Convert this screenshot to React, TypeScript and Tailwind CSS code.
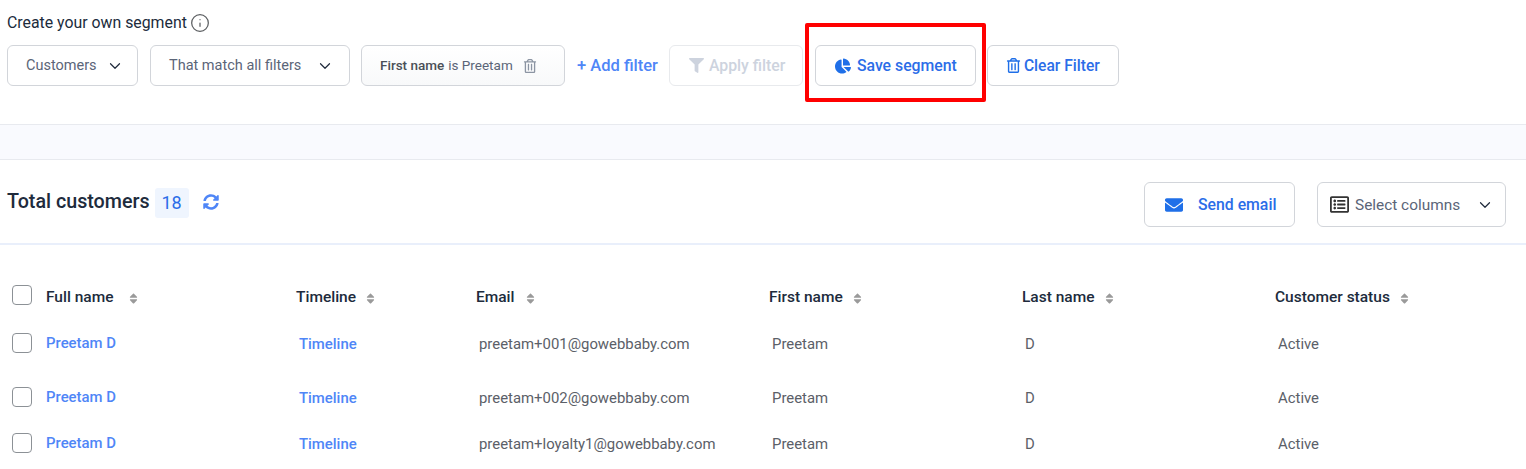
import React from "react";
import { FaChartPie, FaFilter, FaEnvelope, FaSyncAlt, FaSort, FaRegTrashAlt, FaRegListAlt } from "react-icons/fa";
import { ChevronDown, Info } from "lucide-react";

const rows = [
  "preetam+001@gowebbaby.com",
  "preetam+002@gowebbaby.com",
  "preetam+loyalty1@gowebbaby.com",
];

const cols = [
  { label: "Full name", w: "w-[250px]", gap: "ml-[13px]" },
  { label: "Timeline", w: "w-[180px]", gap: "ml-[8px]" },
  { label: "Email", w: "w-[293px]", gap: "ml-[9px]" },
  { label: "First name", w: "w-[253px]", gap: "ml-[8px]" },
  { label: "Last name", w: "w-[253px]", gap: "ml-[8px]" },
  { label: "Customer status", w: "w-[240px]", gap: "ml-[8px]" },
];

function Check({ extra = "" }: { extra?: string }) {
  return <span className={`block w-5 h-5 shrink-0 rounded-[4px] border-[1.5px] border-[#8c9196] bg-white mr-[14px] ${extra}`} />;
}

const btn = "h-[41px] flex items-center rounded-[6px] border border-[#d2d5da] bg-white";

export default function App() {
  return (
    <div className="relative w-[1526px] h-[469px] overflow-hidden bg-white font-['Roboto',sans-serif] text-[#202b3c]">
      <section className="h-[125px] border-b border-[#e8eaef] px-[7px] pt-[12px]">
        <div className="flex items-center h-[22px] text-[15.85px] leading-[22px] font-normal">
          Create your own segment
          <Info size={20} strokeWidth={1.5} className="ml-[3px] text-[#5c5f62]" />
        </div>
        <div className="flex items-center mt-[11px]">
          <div className={`${btn} w-[131px] pl-[18px] text-[14.5px] text-[#5b6578]`}>
            Customers
            <ChevronDown size={18} strokeWidth={1.6} className="ml-[9px] text-[#202b3c]" />
          </div>
          <div className={`${btn} w-[200px] ml-[12px] pl-[18px] text-[14.5px] text-[#5b6578]`}>
            That match all filters
            <ChevronDown size={18} strokeWidth={1.6} className="ml-[15px] text-[#202b3c]" />
          </div>
          <div className={`${btn} w-[204px] ml-[11px] pl-[18px] text-[13.5px] text-[#5b6578] bg-gradient-to-b from-white to-[#f8f9fa]`}>
            <span className="font-medium text-[#4a4f57]">First name</span>
            <span className="ml-[4px]">is Preetam</span>
            <FaRegTrashAlt size={14} className="ml-[10px] text-[#8c95a3]" />
          </div>
          <span className="ml-[12px] pt-[2px] text-[16.5px] font-medium text-[#4f86f7]">+ Add filter</span>
          <div className="h-[41px] flex items-center w-[134px] ml-[11px] pl-[19px] rounded-[6px] border border-[#e8eaed] bg-white text-[15.8px] font-medium text-[#cdd3de]">
            <FaFilter size={15} className="mr-[5px] text-[#cdd3de]" />
            <span className="pt-[1px]">Apply filter</span>
          </div>
          <div className={`${btn} w-[161px] ml-[12px] pl-[19px] text-[15.8px] font-medium text-[#2b6de8]`}>
            <FaChartPie size={16} className="mr-[6px] text-[#1f6fe8]" />
            Save segment
          </div>
          <div className={`${btn} w-[132px] ml-[11px] pl-[18px] text-[15.6px] font-medium text-[#2b6de8]`}>
            <FaRegTrashAlt size={15} className="mr-[3px] text-[#1f6fe8]" />
            <span className="pt-[2px]">Clear Filter</span>
          </div>
        </div>
      </section>

      <div className="h-[34px] bg-[#f9fafe]" />

      <section className="h-[86px] border-t border-t-[#e8eaef] border-b-2 border-b-[#e9effb] flex items-start px-[7px]">
        <div className="flex items-center mt-[27px] h-[30px]">
          <span className="text-[19.7px] font-medium text-[#202b3c]">Total customers</span>
          <span className="ml-[5px] w-[34px] h-[30px] mt-[2px] pb-[2px] flex items-center justify-center rounded-[3px] bg-[#eff5fe] text-[18px] text-[#2b6de8]">18</span>
          <FaSyncAlt size={16} className="ml-[14px] text-[#4f86f7]" />
        </div>
        <div className="ml-auto flex items-center mt-[22px] mr-[13px]">
          <div className="h-[45px] w-[151px] flex items-center pl-[20px] rounded-[6px] border border-[#d2d5da] text-[15.8px] font-medium text-[#2b6de8]">
            <FaEnvelope size={18} className="mr-[15px] text-[#1f6fe8]" />
            Send email
          </div>
          <div className="h-[45px] w-[189px] ml-[22px] flex items-center pl-[12px] rounded-[6px] border border-[#d2d5da] text-[15.4px] text-[#5b6578]">
            <FaRegListAlt size={19} className="mr-[6px] text-[#333]" />
            <span className="pt-[2px]">Select columns</span>
            <ChevronDown size={18} strokeWidth={1.6} className="ml-[16px] text-[#202b3c]" />
          </div>
        </div>
      </section>

      <section className="pt-[39px] pl-[12px]">
        <div className="flex items-center h-[28px]">
          <Check extra="mb-[6px]" />
          {cols.map((c) => (
            <div key={c.label} className={`${c.w} flex items-center text-[15.5px] font-medium text-[#202b3c]`}>
              {c.label}
              <FaSort size={13} className={`${c.gap} mt-[1px] text-[#9a9a9a]`} />
            </div>
          ))}
        </div>
        <div className="h-[21px]" />
        {rows.map((email, i) => (
          <div key={email} className={`flex items-start ${i === 0 ? "h-[54px]" : "h-[46px]"} text-[14.9px] text-[#5b6068]`}>
            <Check />
            <div className="w-[250px] font-medium text-[#4f86f7] h-5 leading-5">Preetam D</div>
            <div className="w-[180px] pl-[3px] font-medium text-[#4f86f7] leading-5 mt-[1px]">Timeline</div>
            <div className="w-[293px] pl-[3px] leading-5 mt-[1px]">{email}</div>
            <div className="w-[253px] pl-[3px] leading-5 mt-[1px]">Preetam</div>
            <div className="w-[253px] pl-[3px] leading-5 mt-[1px]">D</div>
            <div className="w-[240px] pl-[3px] leading-5 mt-[1px]">Active</div>
          </div>
        ))}
      </section>

      <div className="absolute left-[805px] top-[23px] w-[181px] h-[79px] border-4 border-[#ff0000] rounded-[2px] pointer-events-none" />
    </div>
  );
}
